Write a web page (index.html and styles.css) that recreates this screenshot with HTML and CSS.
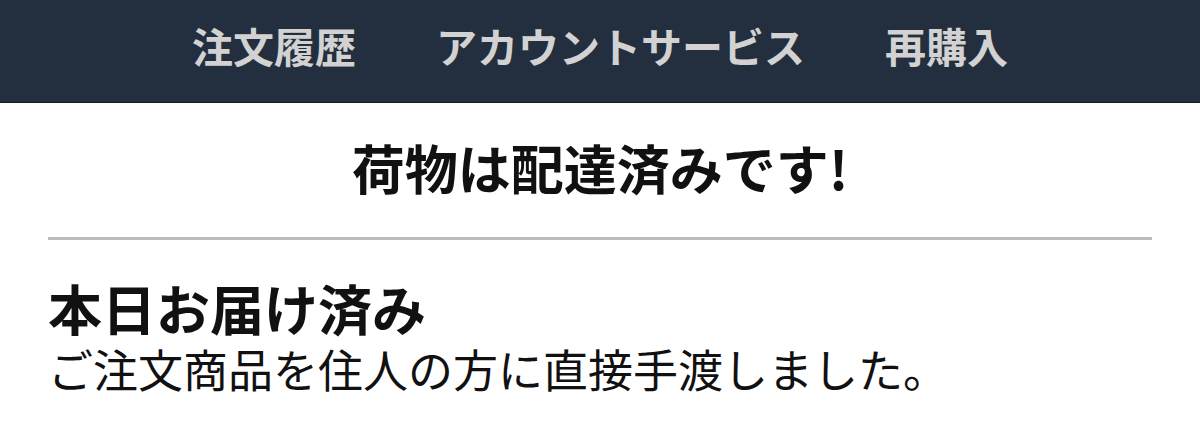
FILE: index.html
```html
<!DOCTYPE html>
<html lang="ja">
<head>
<meta charset="utf-8">
<title>配達状況</title>
<link rel="stylesheet" href="styles.css">
</head>
<body>
<header class="topbar">
  <nav class="nav">
    <a class="nav-item">注文履歴</a>
    <a class="nav-item">アカウントサービス</a>
    <a class="nav-item">再購入</a>
  </nav>
</header>
<main class="content">
  <h1 class="status-title">荷物は配達済みです!</h1>
  <section class="delivery">
    <h2 class="delivery-heading">本日お届け済み</h2>
    <p class="delivery-text">ご注文商品を住人の方に直接手渡しました。</p>
  </section>
</main>
</body>
</html>
```
FILE: styles.css
```css
html, body {
  margin: 0;
  padding: 0;
  background: #ffffff;
}
body {
  font-family: "Noto Sans CJK JP", "Noto Sans", sans-serif;
  color: #111111;
}
.topbar {
  box-sizing: border-box;
  background: #232f3e;
  height: 103px;
  padding-bottom: 10px;
  border-bottom: 1px solid #151c26;
  display: flex;
  align-items: center;
  justify-content: center;
}
.nav {
  display: flex;
  gap: 80px;
  align-items: center;
}
.nav-item {
  color: #d2d2d2;
  font-weight: 700;
  font-size: 41px;
  line-height: 1.2;
  text-decoration: none;
}
.content {
  padding: 0 48px;
}
.status-title {
  margin: 0;
  padding: 33px 0 37px;
  text-align: center;
  font-size: 53px;
  font-weight: 700;
  line-height: 1.2;
  border-bottom: 3px solid #bdbdbd;
}
.delivery {
  padding-top: 36px;
}
.delivery-heading {
  margin: 0;
  font-size: 54px;
  font-weight: 700;
  line-height: 1.2;
}
.delivery-text {
  margin: 0;
  font-size: 45px;
  font-weight: 400;
  line-height: 1.3;
}
```
